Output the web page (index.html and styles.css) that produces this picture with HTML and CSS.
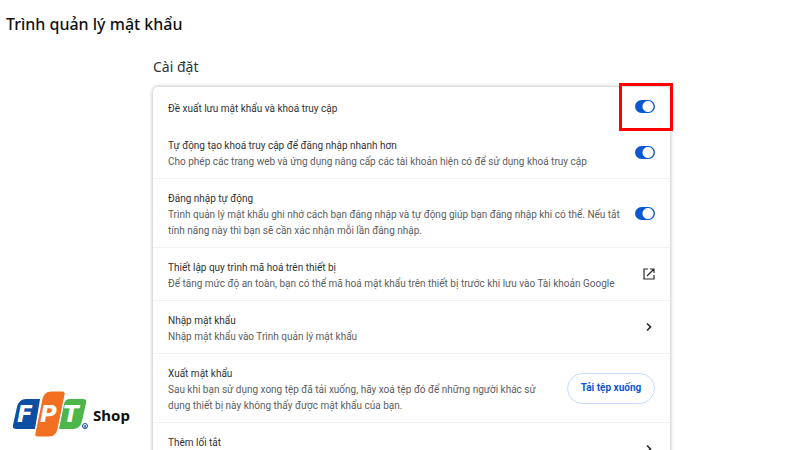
FILE: index.html
```html
<!DOCTYPE html>
<html lang="vi">
<head>
<meta charset="utf-8">
<title>Trình quản lý mật khẩu</title>
<link rel="stylesheet" href="styles.css">
</head>
<body>
<header class="header"><h1>Trình quản lý mật khẩu</h1></header>
<div class="layout">
  <aside class="side">
    <a class="brand" href="#">
      <svg class="logo" viewBox="0 0 78 48" role="img" aria-label="FPT">
        <path fill="#0b4ea2" d="M13 8H27L22 38H3Q-1 38 0 34L4 16Q6 8 13 8Z"/>
        <path fill="#4cb648" d="M57 8H70Q74 8 73 12L69 30Q67 38 60 38H46L51 13Q52 8 57 8Z"/>
        <path fill="#f37022" stroke="#fff" d="M38 0H49Q53 0 52 4L45 38Q43 46 36 46H25Q21 46 22 42L29 8Q31 0 38 0Z"/>
        <g class="letters"><text x="4" y="31">F</text><text x="27" y="31">P</text><text x="50" y="31">T</text></g>
        <circle cx="72" cy="35" r="2.5" fill="#fff" stroke="#0b4ea2"/>
        <text class="mark" x="70.7" y="36.5">R</text>
      </svg>
      <span>Shop</span>
    </a>
  </aside>
  <main class="main">
    <h2>Cài đặt</h2>
    <div class="card">
      <div class="row first">
        <label class="text" for="s1"><span class="title">Đề xuất lưu mật khẩu và khoá truy cập</span></label>
        <span class="marked"><input class="switch" type="checkbox" id="s1" checked></span>
      </div>
      <div class="row">
        <label class="text" for="s2"><span class="title">Tự động tạo khoá truy cập để đăng nhập nhanh hơn</span><span class="desc">Cho phép các trang web và ứng dụng nâng cấp các tài khoản hiện có để sử dụng khoá truy cập</span></label>
        <input class="switch" type="checkbox" id="s2" checked>
      </div>
      <div class="row line">
        <label class="text" for="s3"><span class="title">Đăng nhập tự động</span><span class="desc">Trình quản lý mật khẩu ghi nhớ cách bạn đăng nhập và tự động giúp bạn đăng nhập khi có thể. Nếu tắt<br>tính năng này thì bạn sẽ cần xác nhận mỗi lần đăng nhập.</span></label>
        <input class="switch" type="checkbox" id="s3" checked>
      </div>
      <a class="row line" href="#">
        <span class="text"><span class="title">Thiết lập quy trình mã hoá trên thiết bị</span><span class="desc">Để tăng mức độ an toàn, bạn có thể mã hoá mật khẩu trên thiết bị trước khi lưu vào Tài khoản Google</span></span>
        <svg class="icon" viewBox="0 0 12 12"><path d="M5 1H1V11H11V7M7 1H11V5M11 1L4 8"/></svg>
      </a>
      <a class="row line" href="#">
        <span class="text"><span class="title">Nhập mật khẩu</span><span class="desc">Nhập mật khẩu vào Trình quản lý mật khẩu</span></span>
        <svg class="icon arrow" viewBox="0 0 12 12"><path d="M4 2.5L7.5 6L4 9.5"/></svg>
      </a>
      <div class="row line">
        <div class="text"><span class="title">Xuất mật khẩu</span><span class="desc">Sau khi bạn sử dụng xong tệp đã tải xuống, hãy xoá tệp đó để những người khác sử<br>dụng thiết bị này không thấy được mật khẩu của bạn.</span></div>
        <button class="download" type="button">Tải tệp xuống</button>
      </div>
      <a class="row line last" href="#">
        <span class="text"><span class="title">Thêm lối tắt</span></span>
        <svg class="icon arrow" viewBox="0 0 12 12"><path d="M4 2.5L7.5 6L4 9.5"/></svg>
      </a>
    </div>
  </main>
</div>
</body>
</html>
```
FILE: styles.css
```css
* { box-sizing: border-box; }
body {
  margin: 0;
  height: 100vh;
  overflow: hidden;
  display: flex;
  flex-direction: column;
  background: #fff;
  color: #303236;
  font: 10px/16px Roboto, "Noto Sans", sans-serif;
}
h1, h2 { margin: 0; font-weight: 400; }
.header { padding: 12px 6px 0; }
h1 { font: 500 16px/24px "Noto Sans", sans-serif; color: #111; }
.layout {
  flex: 1;
  min-height: 0;
  display: grid;
  grid-template-columns: 153px minmax(0, 1fr) 130px;
  grid-template-rows: minmax(0, 1fr);
}
.side { display: flex; align-items: flex-end; padding: 0 0 11px 13px; }
.brand {
  display: flex;
  align-items: center;
  gap: 2px;
  color: #111;
  font: 700 15px/20px "Noto Sans", sans-serif;
  text-decoration: none;
}
.logo { width: 78px; height: 48px; }
.letters { fill: #fff; font: italic 700 23px "DejaVu Sans", sans-serif; }
.mark { fill: #0b4ea2; font: 700 4px "Noto Sans", sans-serif; }
.main { padding-top: 20px; }
h2 { font: 400 14px/22px "Noto Sans", sans-serif; margin-bottom: 9px; }
.card { border-radius: 5px; box-shadow: 0 0 4px rgba(0, 0, 0, .32); }
.row {
  display: flex;
  align-items: center;
  gap: 12px;
  padding: 0 15px;
  color: inherit;
  text-decoration: none;
}
.text { flex: 1; min-width: 0; padding: 12px 0 8px; white-space: nowrap; }
.first { height: 39px; }
.last { height: 53px; }
.last .text { align-self: flex-start; }
.line { border-top: 1px solid #f2f2f2; }
.title, .desc { display: block; }
.desc { color: #5c5e61; }
.switch {
  appearance: none;
  flex: none;
  display: block;
  width: 20px;
  height: 13px;
  margin: 0;
  border-radius: 7px;
  background: radial-gradient(circle at 13px 50%, #fff 5px, #0b57d0 6px);
}
.marked { position: relative; }
.marked::after {
  content: "";
  position: absolute;
  inset: -17px -18px -18px -16px;
  border: 3px solid #f00;
  pointer-events: none;
}
.icon { width: 12px; height: 12px; fill: none; stroke: #26282b; stroke-width: 1.2; }
.arrow { stroke-width: 1.6; }
.download {
  width: 88px;
  height: 31px;
  padding: 0;
  border: 1px solid #c5dafb;
  border-radius: 16px;
  background: #fff;
  color: #0b57d0;
  font: 700 10px/16px Roboto, "Noto Sans", sans-serif;
}
```
